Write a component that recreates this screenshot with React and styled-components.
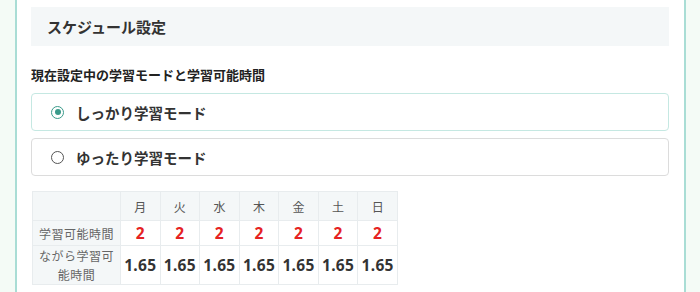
import React from 'react'
import styled, { createGlobalStyle } from 'styled-components'

const Global = createGlobalStyle`
  html, body { margin: 0; padding: 0; }
  body {
    background: #f4fbf6;
    font-family: "Noto Sans CJK JP", "Noto Sans", sans-serif;
    color: #333;
  }
`

const Frame = styled.div`
  margin: 0 15px;
  width: 671px;
  height: 292px;
  background: #fff;
  border-left: 2px solid #a9ddd5;
  border-right: 2px solid #a9ddd5;
  padding: 7px 15px 0 14px;
  box-sizing: border-box;
  overflow: hidden;
`

const Heading = styled.h2`
  margin: 0;
  height: 39px;
  background: #f4f7f8;
  padding: 0 16px;
  display: flex;
  align-items: center;
  font-size: 15px;
  font-weight: 700;
  color: #333;
`

const Label = styled.div`
  margin-top: 21px;
  font-size: 13px;
  font-weight: 700;
  line-height: 16px;
  color: #222;
`

const Options = styled.div`
  margin-top: 10px;
  display: flex;
  flex-direction: column;
  gap: 7px;
`

const Option = styled.label`
  height: 38px;
  box-sizing: border-box;
  border: 1px solid ${p => (p.$active ? '#c5e8e2' : '#dcdcdc')};
  border-radius: 4px;
  display: flex;
  align-items: center;
  gap: 12px;
  padding-left: 19px;
  font-size: 14.5px;
  font-weight: 700;
  color: #333;
`

const Radio = styled.span`
  width: 11px;
  height: 11px;
  border-radius: 50%;
  border: 1.5px solid ${p => (p.$active ? '#3a9a8a' : '#555')};
  display: flex;
  align-items: center;
  justify-content: center;
  &::after {
    content: '';
    width: 6px;
    height: 6px;
    border-radius: 50%;
    background: #3a9a8a;
    display: ${p => (p.$active ? 'block' : 'none')};
  }
`

const Table = styled.table`
  margin: 15px 0 0 1px;
  border-collapse: collapse;
  table-layout: fixed;
  width: 366px;
  font-size: 12px;
`

const Th = styled.th`
  background: #f4f7f8;
  border: 1px solid #e8ecee;
  font-weight: 400;
  color: #555;
  height: 28px;
  width: ${p => (p.$wide ? '87px' : 'auto')};
  padding: 0;
`

const RowHead = styled.th`
  background: #f4f7f8;
  border: 1px solid #e8ecee;
  font-weight: 400;
  color: #666;
  padding: 0;
  white-space: nowrap;
  letter-spacing: 0.5px;
  line-height: 19px;
  height: ${p => p.$h};
`

const Td = styled.td`
  border: 1px solid #e8ecee;
  text-align: center;
  font-family: "Noto Sans", sans-serif;
  font-weight: 700;
  font-size: 15.5px;
  letter-spacing: 0.3px;
  white-space: nowrap;
  color: ${p => (p.$red ? '#e52222' : '#333')};
  padding: 0;
`

const days = ['月', '火', '水', '木', '金', '土', '日']

export default function App() {
  return (
    <>
      <Global />
      <Frame>
        <Heading>スケジュール設定</Heading>
        <Label>現在設定中の学習モードと学習可能時間</Label>
        <Options>
          <Option $active>
            <Radio $active />
            しっかり学習モード
          </Option>
          <Option>
            <Radio />
            ゆったり学習モード
          </Option>
        </Options>
        <Table>
          <thead>
            <tr>
              <Th $wide />
              {days.map(d => <Th key={d}>{d}</Th>)}
            </tr>
          </thead>
          <tbody>
            <tr>
              <RowHead $h="24px">学習可能時間</RowHead>
              {days.map(d => <Td key={d} $red>2</Td>)}
            </tr>
            <tr>
              <RowHead $h="38px">ながら学習可<br />能時間</RowHead>
              {days.map(d => <Td key={d}>1.65</Td>)}
            </tr>
          </tbody>
        </Table>
      </Frame>
    </>
  )
}
